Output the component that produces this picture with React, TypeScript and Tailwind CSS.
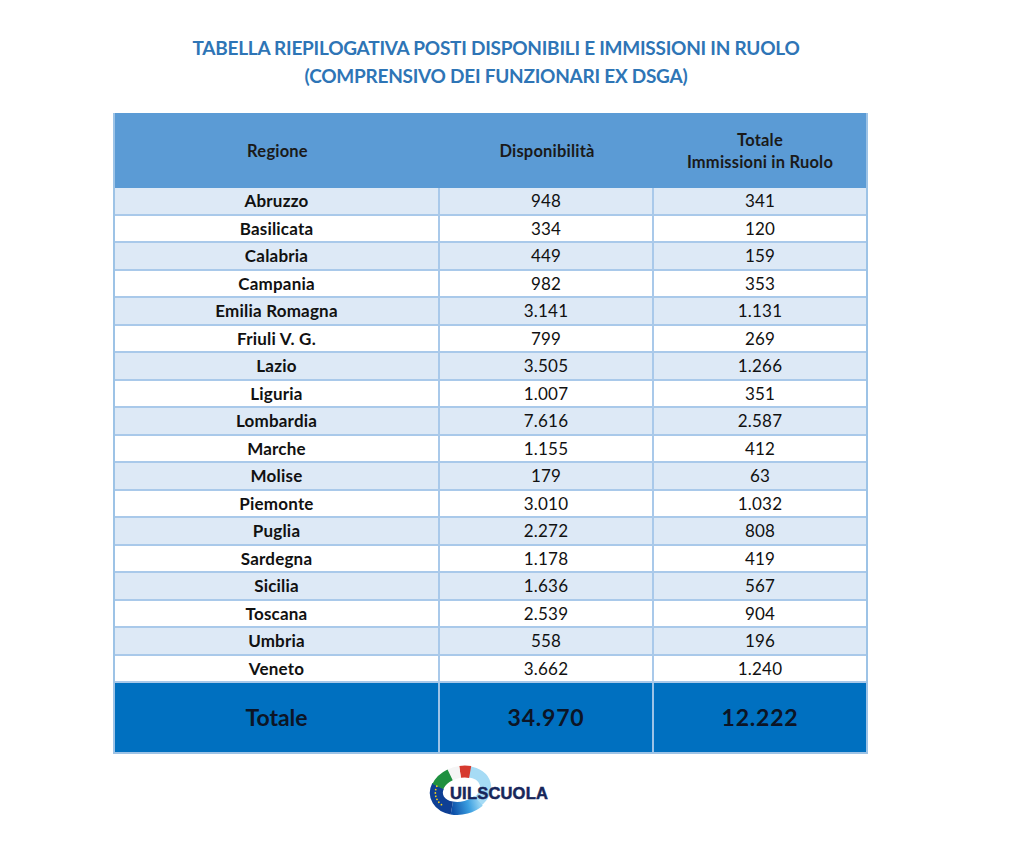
import React from "react";

const rows: [string, string, string][] = [
  ["Abruzzo", "948", "341"],
  ["Basilicata", "334", "120"],
  ["Calabria", "449", "159"],
  ["Campania", "982", "353"],
  ["Emilia Romagna", "3.141", "1.131"],
  ["Friuli V. G.", "799", "269"],
  ["Lazio", "3.505", "1.266"],
  ["Liguria", "1.007", "351"],
  ["Lombardia", "7.616", "2.587"],
  ["Marche", "1.155", "412"],
  ["Molise", "179", "63"],
  ["Piemonte", "3.010", "1.032"],
  ["Puglia", "2.272", "808"],
  ["Sardegna", "1.178", "419"],
  ["Sicilia", "1.636", "567"],
  ["Toscana", "2.539", "904"],
  ["Umbria", "558", "196"],
  ["Veneto", "3.662", "1.240"],
];

const CX = 33;
const CY = 29;
const RX = 25;
const RY = 18;
function pt(t: number) {
  const r = (t * Math.PI) / 180;
  return `${(CX + RX * Math.cos(r)).toFixed(2)} ${(CY + RY * Math.sin(r)).toFixed(2)}`;
}
function arc(t1: number, t2: number) {
  const large = Math.abs(t1 - t2) > 180 ? 1 : 0;
  return `M ${pt(t1)} A ${RX} ${RY} 0 ${large} 0 ${pt(t2)}`;
}

function Logo() {
  const stars: number[] = [-150, -160, -170, -180, -190, -200, -210];
  return (
    <div className="relative w-[122px] h-[56px]">
      <svg width="122" height="56" viewBox="0 0 122 56" className="absolute left-0 top-0">
        <defs>
          <linearGradient id="bot" x1="0" y1="0" x2="1" y2="0">
            <stop offset="0" stopColor="#0d4fa8" />
            <stop offset="0.6" stopColor="#3a9ee0" />
            <stop offset="1" stopColor="#8fd0f2" />
          </linearGradient>
        </defs>
        <g transform={`rotate(-14 ${CX} ${CY})`}>
          <path d={arc(60, -62)} stroke="#a6dbf5" strokeWidth="11" fill="none" />
          <path d={arc(122, 55)} stroke="url(#bot)" strokeWidth="13" fill="none" />
          <path d={arc(-148, -238)} stroke="#0e3f94" strokeWidth="13" fill="none" />
          <path d={arc(-58, -82)} stroke="#d63a2f" strokeWidth="12" fill="none" />
          <path d={arc(-82, -106)} stroke="#f5f5f5" strokeWidth="12" fill="none" />
          <path d={arc(-106, -150)} stroke="#1f9040" strokeWidth="12" fill="none" />
          {stars.map((t, i) => {
            const r = (t * Math.PI) / 180;
            return (
              <circle
                key={i}
                cx={CX + (RX + 1) * Math.cos(r)}
                cy={CY + (RY + 1) * Math.sin(r)}
                r="0.9"
                fill="#f6d21a"
              />
            );
          })}
        </g>
      </svg>
      <span
        className="absolute left-[22px] top-[24px] text-[16.5px] leading-none font-bold tracking-[0.2px] text-[#17265a] [-webkit-text-stroke:0.5px_#17265a]"
        style={{ fontFamily: "'Liberation Sans', Arial, sans-serif" }}
      >
        UILSCUOLA
      </span>
    </div>
  );
}

export default function App() {
  return (
    <div
      className="w-[1014px] h-[858px] bg-white"
      style={{ fontFamily: "Lato, 'Open Sans', sans-serif" }}
    >
      <div className="pt-[34px] pl-[113px]">
        <div className="w-[755px] pl-[11px] text-center text-[#2e75b6] font-bold text-[19px] leading-[28px] tracking-[-0.25px]">
          <div>TABELLA RIEPILOGATIVA POSTI DISPONIBILI E IMMISSIONI IN RUOLO</div>
          <div>(COMPRENSIVO DEI FUNZIONARI EX DSGA)</div>
        </div>
        <div className="mt-[23px] w-[755px] border-l-2 border-r-2 border-[#9dc3e6]">
          <div className="grid grid-cols-[325px_214px_212px] h-[75px] bg-[#5b9bd5] text-[#1a1a1a] font-bold text-[16.5px] leading-[22px] tracking-[0.2px]">
            <div className="flex items-center justify-center">Regione</div>
            <div className="flex items-center justify-center">Disponibilità</div>
            <div className="flex flex-col items-center justify-center text-center">
              <div>Totale</div>
              <div>Immissioni in Ruolo</div>
            </div>
          </div>
          {rows.map(([r, d, t], i) => (
            <div
              key={r}
              className={`grid grid-cols-[325px_214px_212px] h-[27.5px] border-b-2 border-[#a9c9ea] text-[17px] tracking-[0.2px] text-[#111] ${
                i % 2 === 0 ? "bg-[#dde9f6]" : "bg-white"
              }`}
            >
              <div className="flex items-center justify-center font-bold border-r-2 border-[#a9c9ea]">{r}</div>
              <div className="flex items-center justify-center border-r-2 border-[#a9c9ea]">{d}</div>
              <div className="flex items-center justify-center">{t}</div>
            </div>
          ))}
          <div className="grid grid-cols-[325px_214px_212px] h-[71px] bg-[#0070c0] border-b-2 border-[#9dc3e6] text-[23px] font-bold text-[#0c1526]">
            <div className="flex items-center justify-center border-r-2 border-[#9dc3e6]">Totale</div>
            <div className="flex items-center justify-center border-r-2 border-[#9dc3e6] tracking-[0.8px]">34.970</div>
            <div className="flex items-center justify-center tracking-[0.8px]">12.222</div>
          </div>
        </div>
        <div className="pl-[315px] mt-[7px]">
          <Logo />
        </div>
      </div>
    </div>
  );
}
